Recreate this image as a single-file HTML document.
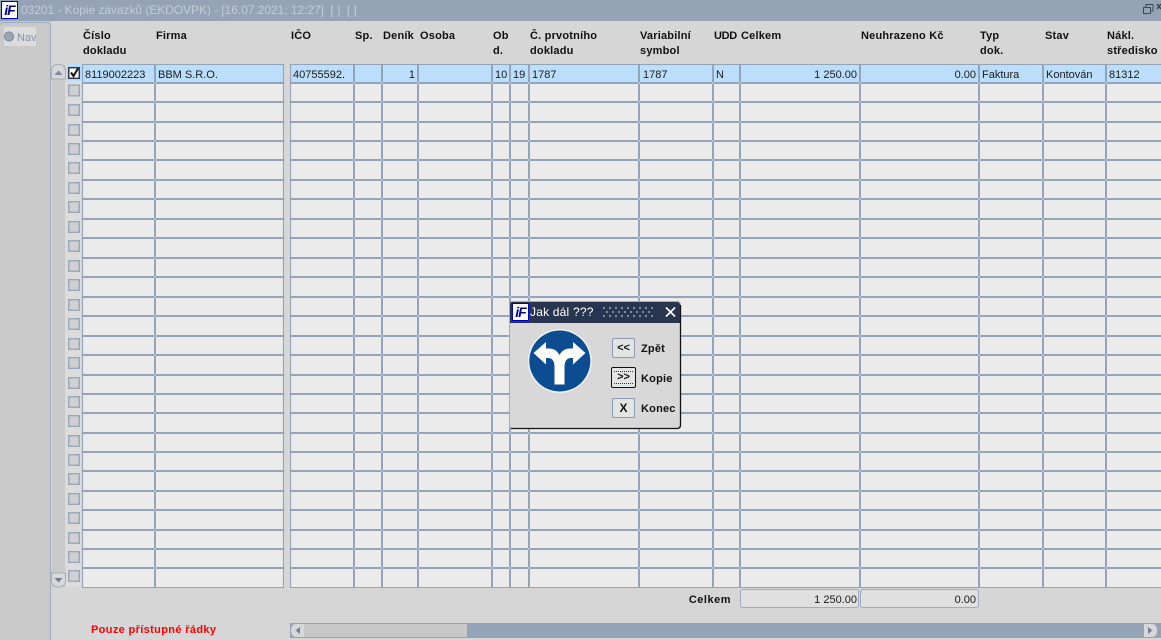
<!DOCTYPE html>
<html><head><meta charset="utf-8"><style>
html,body{margin:0;padding:0;width:1161px;height:640px;overflow:hidden;background:#d6d6d6;font:11px/15px "Liberation Sans",Arial,sans-serif;color:#000}
div{position:absolute;white-space:nowrap}
.h{font-weight:bold;letter-spacing:.2px;color:#111;top:29px}
.t{top:68px;color:#1a1a1a}
.r{text-align:right}
.lg{position:absolute;background:#fff;border:1px solid #00c;width:15px;height:16px;color:#00008b;font:italic bold 14px/16px "Liberation Sans",sans-serif;text-align:center;letter-spacing:-1px}
.btn{background:#e4e4e4;border:1px solid #8c9cb2;border-radius:2px;text-align:center;font-weight:bold;color:#111;box-sizing:border-box}
.lb{font-weight:bold;letter-spacing:.2px;color:#111}
</style></head><body>
<svg width="1161" height="640" style="position:absolute;left:0;top:0">
<defs><path id="hl" d="M82 83H1161M82 102H1161M82 122H1161M82 141H1161M82 160H1161M82 180H1161M82 199H1161M82 219H1161M82 238H1161M82 258H1161M82 277H1161M82 297H1161M82 316H1161M82 336H1161M82 355H1161M82 375H1161M82 394H1161M82 413H1161M82 433H1161M82 452H1161M82 471H1161M82 491H1161M82 510H1161M82 530H1161M82 549H1161M82 568H1161"/></defs>
<rect x="0" y="0" width="1161" height="21" fill="#94a3b6"/>
<rect x="0" y="21" width="51" height="619" fill="#c9c9c9"/>
<path d="M0.500 24.500Q0.500 22.500 3 22.500H47Q50.500 22.500 50.500 26V640" fill="none" stroke="#9fadbf" stroke-width="1"/>
<rect x="4" y="27" width="32" height="19" fill="#dcdcdc"/>
<circle cx="9" cy="36.500" r="4.500" fill="#9aa5b5" stroke="#7f8fa5" stroke-width="1.200"/>
<rect x="65" y="64" width="17" height="523" fill="#dcdcdc"/>
<rect x="82" y="64" width="1079" height="19" fill="#bbdefc"/>
<rect x="82" y="83" width="1079" height="504" fill="#ebebeb"/>
<use href="#hl" stroke="#94a4b8" stroke-width="2" fill="none"/>
<path d="M82 64.500H1161M82 587.500H1161" stroke="#94a4b8" stroke-width="1" fill="none"/>
<path d="M155 64V587.500M354 64V587.500M382 64V587.500M418 64V587.500M492 64V587.500M510 64V587.500M529 64V587.500M639 64V587.500M713 64V587.500M740 64V587.500M860 64V587.500M979 64V587.500M1043 64V587.500M1106 64V587.500" stroke="#94a4b8" stroke-width="2" fill="none"/>
<path d="M82.500 64V587.500M283.500 64V587.500M290.500 64V587.500" stroke="#94a4b8" stroke-width="1.200" fill="none"/>
<rect x="284.200" y="63" width="5.600" height="526" fill="#d6d6d6"/>
<use href="#hl" stroke="#dfe4ea" stroke-width="1.300" fill="none" stroke-dasharray="0 72.300 1.400 197.600 1.400 26.600 1.400 34.600 1.400 72.600 1.400 16.600 1.400 17.600 1.400 108.600 1.400 72.600 1.400 25.600 1.400 118.600 1.400 117.600 1.400 62.600 1.400 61.600 1.400 100"/>
<rect x="52" y="65" width="13" height="522" fill="#c9c9c9"/>
<path d="M51.500 79V71Q51.500 64.500 58.500 64.500Q65.500 64.500 65.500 71V79Z" fill="#d8d8d8" stroke="#9fadbf"/>
<path d="M54.500 75H62.500L58.500 70.500Z" fill="#7a8aa2"/>
<path d="M51.500 573V580Q51.500 587 58.500 587Q65.500 587 65.500 580V573Z" fill="#d8d8d8" stroke="#9fadbf"/>
<path d="M54.500 578H62.500L58.500 582.500Z" fill="#6f7f98"/>
<rect x="67" y="64" width="14" height="18" fill="#bbdefc"/>
<rect x="68.700" y="67.700" width="10.600" height="10.600" fill="#fff" stroke="#2c3a50" stroke-width="1.500"/>
<path d="M71 72.500L73.500 76L78 68.500" fill="none" stroke="#111" stroke-width="2"/>
<g fill="#d0d0d0" stroke="#98a8bc" stroke-width="1.400">
<rect x="68.700" y="85.200" width="10.600" height="10.600"/><rect x="68.700" y="104.700" width="10.600" height="10.600"/><rect x="68.700" y="124.700" width="10.600" height="10.600"/><rect x="68.700" y="143.700" width="10.600" height="10.600"/><rect x="68.700" y="162.700" width="10.600" height="10.600"/><rect x="68.700" y="182.700" width="10.600" height="10.600"/><rect x="68.700" y="201.700" width="10.600" height="10.600"/><rect x="68.700" y="221.700" width="10.600" height="10.600"/><rect x="68.700" y="240.700" width="10.600" height="10.600"/><rect x="68.700" y="260.700" width="10.600" height="10.600"/><rect x="68.700" y="279.700" width="10.600" height="10.600"/><rect x="68.700" y="299.700" width="10.600" height="10.600"/><rect x="68.700" y="318.700" width="10.600" height="10.600"/><rect x="68.700" y="338.700" width="10.600" height="10.600"/><rect x="68.700" y="357.700" width="10.600" height="10.600"/><rect x="68.700" y="377.700" width="10.600" height="10.600"/><rect x="68.700" y="396.700" width="10.600" height="10.600"/><rect x="68.700" y="415.700" width="10.600" height="10.600"/><rect x="68.700" y="435.700" width="10.600" height="10.600"/><rect x="68.700" y="454.700" width="10.600" height="10.600"/><rect x="68.700" y="473.700" width="10.600" height="10.600"/><rect x="68.700" y="493.700" width="10.600" height="10.600"/><rect x="68.700" y="512.700" width="10.600" height="10.600"/><rect x="68.700" y="532.700" width="10.600" height="10.600"/><rect x="68.700" y="551.700" width="10.600" height="10.600"/><rect x="68.700" y="570.700" width="10.600" height="10.600"/>
</g>
<rect x="740.500" y="589.500" width="118" height="18" rx="2" fill="#e0e0e0" stroke="#9fadbf"/>
<rect x="860.500" y="589.500" width="118" height="18" rx="2" fill="#e0e0e0" stroke="#9fadbf"/>
<rect x="290" y="623" width="871" height="15" fill="#94a3b6"/>
<rect x="304" y="624" width="163" height="13" fill="#c8c8c8"/>
<path d="M304 624H297Q291 624 291 630.500Q291 637 297 637H304Z" fill="#d8d8d8"/>
<path d="M300 627V634L295.500 630.500Z" fill="#6f7f98"/>
<path d="M1144 624H1151Q1157 624 1157 630.500Q1157 637 1151 637H1144Z" fill="#d8d8d8"/>
<path d="M1148 627V634L1152.500 630.500Z" fill="#6f7f98"/>
<g fill="none" stroke="#3c4a5e" stroke-width="1"><rect x="1143.500" y="7.500" width="7" height="6"/><path d="M1146 7V4.500H1153V11H1151"/></g>
<path d="M1157 4L1161 9M1161 4L1157 9" stroke="#3c4a5e" stroke-width="1.500"/>
<rect x="509.500" y="301.500" width="171" height="127" rx="3" fill="#d8d8d8" stroke="#9fadbf"/>
<path d="M680.500 305V425Q680.500 428.500 677 428.500H511" fill="none" stroke="#111" stroke-width="1.300"/>
<path d="M510 323V304Q510 302 512 302H677Q680 302 680 305V323Z" fill="#27364e"/>
<path d="M603 308h51M603 316h51" stroke="#9aa5b4" stroke-width="1.500" stroke-dasharray="2 4" fill="none"/>
<path d="M606 312h48" stroke="#9aa5b4" stroke-width="1.500" stroke-dasharray="2 4" fill="none"/>
<path d="M666 307.500L675 316.500M675 307.500L666 316.500" stroke="#fff" stroke-width="1.600"/>
<circle cx="559.800" cy="361" r="32" fill="#eef1f4"/>
<circle cx="559.800" cy="361" r="30.500" fill="#0c4d91"/>
<path d="M533.500 353L546 342V348.500H549Q556 348.500 559.500 355Q563 348.500 570 348.500H573V342L585.500 353L573 364.500V358H571Q565 358 564.500 366V384.500H554.500V366Q554 358 548 358H546V364.500Z" fill="#fff"/>
</svg>
<div class="lg" style="left:1px;top:1px">iF</div>
<div style="left:21px;top:3px;font-size:12px;line-height:15px;color:#c2cdd9;letter-spacing:-.05px">03201 - Kopie závazků (EKDOVPK) - [16.07.2021; 12:27]&nbsp; [ ]&nbsp; [ ]</div>
<div style="left:17px;top:31px;color:#8494aa">Nav</div>

<div class="h" style="left:83px">Číslo<br>dokladu</div>
<div class="h" style="left:156px">Firma</div>
<div class="h" style="left:291px">IČO</div>
<div class="h" style="left:355px">Sp.</div>
<div class="h" style="left:383px">Deník</div>
<div class="h" style="left:420px">Osoba</div>
<div class="h" style="left:493px">Ob<br>d.</div>
<div class="h" style="left:530px">Č. prvotního<br>dokladu</div>
<div class="h" style="left:640px">Variabilní<br>symbol</div>
<div class="h" style="left:714px;letter-spacing:-.3px">UDD</div>
<div class="h" style="left:741px">Celkem</div>
<div class="h" style="left:861px">Neuhrazeno Kč</div>
<div class="h" style="left:980px">Typ<br>dok.</div>
<div class="h" style="left:1045px">Stav</div>
<div class="h" style="left:1107px">Nákl.<br>středisko</div>

<div class="t" style="left:85px">8119002223</div>
<div class="t" style="left:158px">BBM S.R.O.</div>
<div class="t" style="left:293px">40755592.</div>
<div class="t r" style="left:382px;width:33px">1</div>
<div class="t" style="left:495px">10</div>
<div class="t" style="left:513px">19</div>
<div class="t" style="left:532px">1787</div>
<div class="t" style="left:643px">1787</div>
<div class="t" style="left:716px">N</div>
<div class="t r" style="left:740px;width:117px">1 250.00</div>
<div class="t r" style="left:860px;width:116px">0.00</div>
<div class="t" style="left:982px">Faktura</div>
<div class="t" style="left:1046px">Kontován</div>
<div class="t" style="left:1109px">81312</div>

<div class="lb r" style="left:660px;width:71px;top:593px;letter-spacing:.5px">Celkem</div>
<div class="t r" style="left:740px;width:117px;top:593px">1 250.00</div>
<div class="t r" style="left:860px;width:116px;top:593px">0.00</div>
<div style="left:91px;top:623px;font-weight:bold;color:#f00;letter-spacing:.35px">Pouze přístupné řádky</div>

<div class="lg" style="left:512px;top:303px">iF</div>
<div style="left:530px;top:305px;font-size:12px;line-height:15px;color:#fff;letter-spacing:.2px">Jak dál ???</div>
<div class="btn" style="left:612px;top:338px;width:23px;height:20px;line-height:19px">&lt;&lt;</div>
<div class="btn" style="left:611px;top:367px;width:25px;height:21px;line-height:19px;border:1.500px solid #111">&gt;&gt;<div style="left:2px;right:2px;top:3px;bottom:3px;border-top:1px dotted #333;border-bottom:1px dotted #333"></div></div>
<div class="btn" style="left:612px;top:398px;width:23px;height:20px;line-height:19px;font-size:12px">X</div>
<div class="lb" style="left:641px;top:342px">Zpět</div>
<div class="lb" style="left:641px;top:372px">Kopie</div>
<div class="lb" style="left:641px;top:402px">Konec</div>
</body></html>
